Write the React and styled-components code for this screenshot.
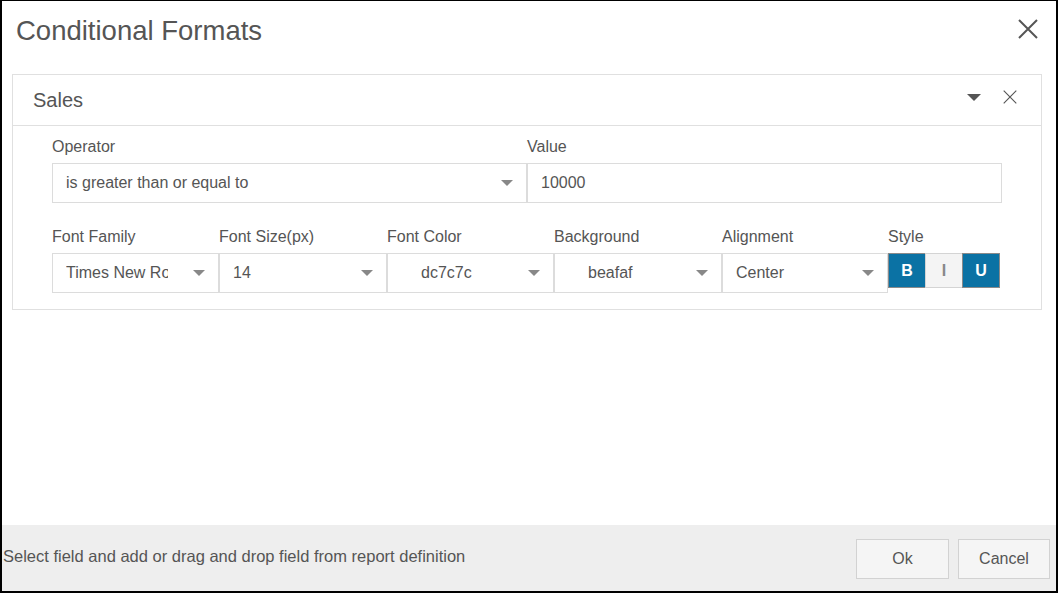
import React from "react";
import styled, { createGlobalStyle } from "styled-components";

const Global = createGlobalStyle`
  * { box-sizing: border-box; }
  html, body { margin: 0; padding: 0; background: #fff; }
  body { font-family: "Liberation Sans", Arial, Helvetica, sans-serif; color: #555; }
`;

const Dialog = styled.div`
  width: 1058px;
  height: 593px;
  border-style: solid;
  border-color: #000;
  border-width: 1px 2px 2px 2px;
  display: flex;
  flex-direction: column;
  background: #fff;
`;

const TitleBar = styled.div`
  height: 60px;
  display: flex;
  align-items: center;
  justify-content: space-between;
  padding: 0 18px 0 14px;
`;

const Title = styled.h1`
  margin: 0;
  font-size: 27.5px;
  font-weight: 400;
  color: #555;
  line-height: 62px;
`;

const CloseIcon = styled.svg`
  width: ${(p) => p.$size || 20}px;
  height: ${(p) => p.$size || 20}px;
  margin-top: ${(p) => p.$mt || 0}px;
  display: block;
  flex: none;
`;

const Panel = styled.div`
  margin: 13px 14px 0 10px;
  border: 1px solid #e0e0e0;
`;

const PanelHeader = styled.div`
  height: 51px;
  border-bottom: 1px solid #e0e0e0;
  display: flex;
  align-items: center;
  justify-content: space-between;
  padding: 0 24px 0 20px;
`;

const PanelTitle = styled.span`
  font-size: 20px;
  color: #555;
`;

const HeaderIcons = styled.div`
  display: flex;
  align-items: center;
  gap: 22px;
  margin-top: -6px;
`;

const Caret = styled.span`
  width: 0;
  height: 0;
  border-left: ${(p) => p.$size || 6}px solid transparent;
  border-right: ${(p) => p.$size || 6}px solid transparent;
  border-top: ${(p) => p.$h || 6}px solid ${(p) => p.$color || "#888"};
  flex: none;
`;

const PanelBody = styled.div`
  padding: 11px 39px 16px;
`;

const Row = styled.div`
  display: flex;
  margin-top: ${(p) => p.$mt || 0}px;
`;

const Field = styled.div`
  width: ${(p) => p.$w}px;
  flex: none;
`;

const Label = styled.div`
  font-size: 16px;
  line-height: 20px;
  color: #555;
  margin-bottom: 6px;
  white-space: nowrap;
`;

const SelectBox = styled.div`
  height: 40px;
  border: 1px solid #dcdcdc;
  display: flex;
  align-items: center;
  padding: 0 13px 0 ${(p) => p.$pl || 13}px;
  font-size: 16px;
  color: #555;
  background: #fff;
`;

const SelectText = styled.span`
  flex: 1;
  overflow: hidden;
  white-space: nowrap;
  margin-right: 25px;
`;

const StyleGroup = styled.div`
  display: flex;
  height: 35px;
`;

const StyleBtn = styled.div`
  width: 38px;
  height: 35px;
  display: flex;
  align-items: center;
  justify-content: center;
  font-size: 16px;
  font-weight: 700;
  border: 1px solid;
  margin-left: ${(p) => (p.$first ? 0 : -1)}px;
  background: ${(p) => (p.$on ? "#0b72a4" : "#f4f4f4")};
  color: ${(p) => (p.$on ? "#fff" : "#888")};
  border-color: ${(p) => (p.$on ? "#8a8a8a" : "#d4d4d4")};
`;

const Spacer = styled.div`
  flex: 1;
`;

const Footer = styled.div`
  height: 66px;
  background: #eeeeee;
  display: flex;
  align-items: center;
  justify-content: space-between;
  padding: 0 6px 0 1px;
`;

const FooterText = styled.span`
  font-size: 16.5px;
  color: #555;
  margin-top: -3px;
`;

const Buttons = styled.div`
  display: flex;
  gap: 9px;
  margin-top: 1px;
`;

const Button = styled.button`
  width: ${(p) => p.$w}px;
  height: 40px;
  border: 1px solid #d2d2d2;
  background: #f5f5f5;
  font-family: "Liberation Sans", Arial, sans-serif;
  font-size: 16px;
  color: #555;
  padding: 0;
`;

const XIcon = ({ size = 20, stroke = 2, mt = 0 }) => (
  <CloseIcon viewBox="0 0 20 20" $size={size} $mt={mt}>
    <path d="M1 1L19 19M19 1L1 19" stroke="#555" strokeWidth={stroke} fill="none" />
  </CloseIcon>
);

const Select = ({ value, pl }) => (
  <SelectBox $pl={pl}>
    <SelectText>{value}</SelectText>
    <Caret />
  </SelectBox>
);

export default function App() {
  return (
    <>
      <Global />
      <Dialog>
        <TitleBar>
          <Title>Conditional Formats</Title>
          <XIcon size={20} stroke={2} mt={-4} />
        </TitleBar>
        <Panel>
          <PanelHeader>
            <PanelTitle>Sales</PanelTitle>
            <HeaderIcons>
              <Caret $size={7} $h={7} $color="#555" />
              <XIcon size={14} stroke={1.6} />
            </HeaderIcons>
          </PanelHeader>
          <PanelBody>
            <Row>
              <Field $w={475}>
                <Label>Operator</Label>
                <Select value="is greater than or equal to" />
              </Field>
              <Field $w={475}>
                <Label>Value</Label>
                <SelectBox>10000</SelectBox>
              </Field>
            </Row>
            <Row $mt={24}>
              <Field $w={167}>
                <Label>Font Family</Label>
                <Select value="Times New Roman" />
              </Field>
              <Field $w={168}>
                <Label>Font Size(px)</Label>
                <Select value="14" />
              </Field>
              <Field $w={167}>
                <Label>Font Color</Label>
                <Select value="dc7c7c" pl={33} />
              </Field>
              <Field $w={168}>
                <Label>Background</Label>
                <Select value="beafaf" pl={33} />
              </Field>
              <Field $w={166}>
                <Label>Alignment</Label>
                <Select value="Center" />
              </Field>
              <Field $w={112}>
                <Label>Style</Label>
                <StyleGroup>
                  <StyleBtn $on $first>B</StyleBtn>
                  <StyleBtn>I</StyleBtn>
                  <StyleBtn $on>U</StyleBtn>
                </StyleGroup>
              </Field>
            </Row>
          </PanelBody>
        </Panel>
        <Spacer />
        <Footer>
          <FooterText>Select field and add or drag and drop field from report definition</FooterText>
          <Buttons>
            <Button $w={93}>Ok</Button>
            <Button $w={92}>Cancel</Button>
          </Buttons>
        </Footer>
      </Dialog>
    </>
  );
}
